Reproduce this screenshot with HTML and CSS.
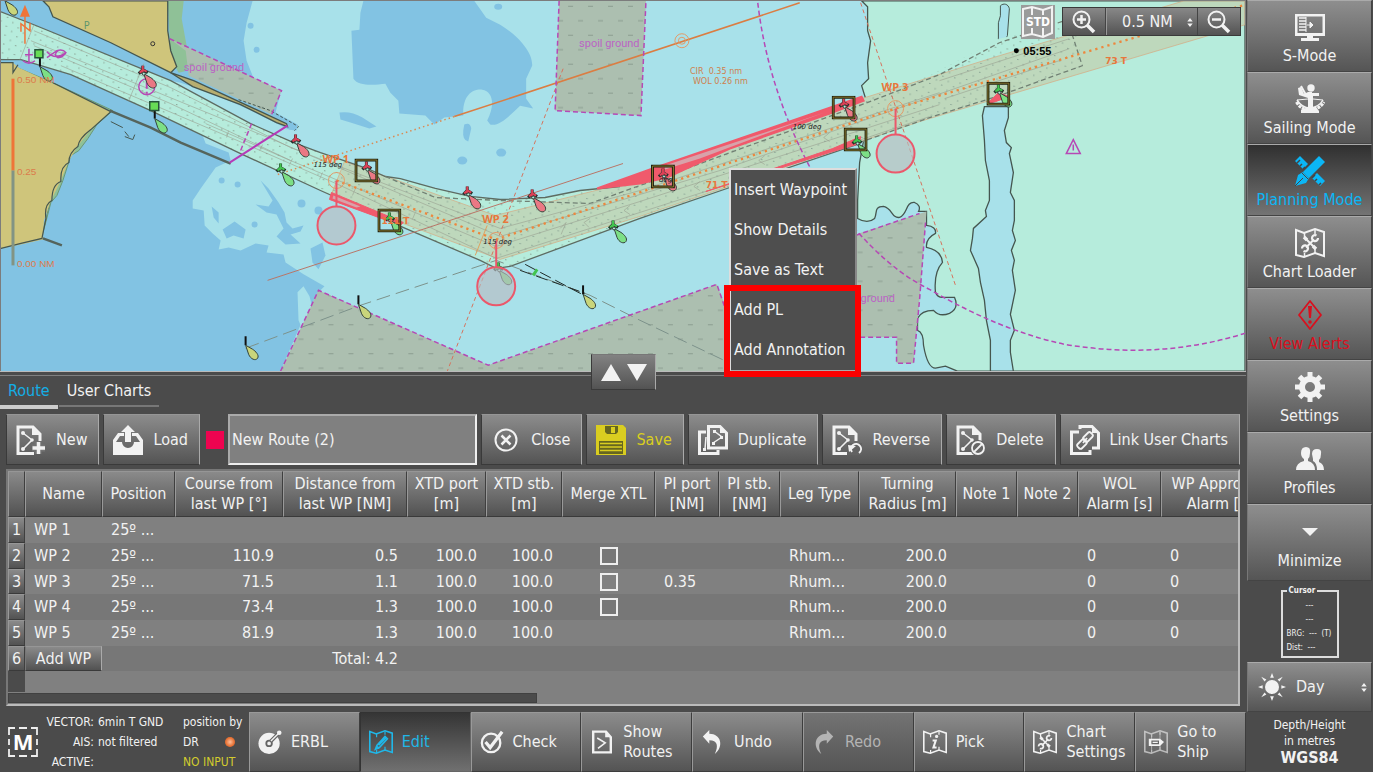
FILE: index.html
```html
<!DOCTYPE html>
<html lang="en">
<head>
<meta charset="utf-8">
<title>Route Planning</title>
<link rel="stylesheet" href="styles.css">
</head>
<body>
<svg class="defs" aria-hidden="true">
  <defs>
    <pattern id="hatch" width="40" height="29" patternUnits="userSpaceOnUse"><path d="M8 5.500h5M28 5.500h5M18 20h5M38 20h2M0 20h3" stroke="#8b9d90" fill="none"/></pattern>
    <pattern id="dots" width="12" height="9" patternUnits="userSpaceOnUse" patternTransform="rotate(8)"><path d="M2 2h1.500M8 6.500h1.500" stroke="#8aa596" stroke-width="1"/></pattern>
    <symbol id="cone" viewBox="0 0 20 26" overflow="visible"><path d="M-1 0V-8M-5 0L-1-4L4-1" stroke-width="3" stroke="#22302a"/><path d="M-1-1V-8M-4-1L-1-4L3-2" stroke-width="2"/><path d="M0 0L3 9C5 14 10 16 12 13C14 10 10 6 7 4Z" fill="currentColor" stroke="#33423a"/><circle r="1.500" fill="#b6ecdc" stroke="#33423a"/></symbol>
    <symbol id="beacon" viewBox="0 0 20 26" overflow="visible"><path d="M0 0V-9" stroke="#111" stroke-width="2"/><path d="M0 0L3 9C5 14 10 16 12 13C14 10 10 6 7 4Z" fill="currentColor" stroke="#33423a"/></symbol>
    <symbol id="frame" viewBox="0 0 24 24"><path d="M1.500 1.500h21v21h-21z" fill="none" stroke="#20200f" stroke-width="3"/><path d="M1.500 1.500h21v21h-21z" fill="none" stroke="#8a7a30"/></symbol>
    <symbol id="map" viewBox="0 0 30 30"><path d="M1 2L9 5L20 1L29 4V28L20 25L9 29L1 27Z" fill="none" stroke="currentColor" stroke-width="2"/><path d="M9.500 5v4M20 2v4M9.500 25v4M20 21v4" stroke="currentColor" stroke-width="1.500"/></symbol>
    <symbol id="tools" viewBox="0 0 30 30"><path d="M9 9L12 12M18 18L21 21" stroke="currentColor" stroke-width="3.500"/><path d="M11 11L19 19M19 11.500L11 19.500" stroke="currentColor" stroke-width="2"/><path d="M21.500 7.500A3 3 0 1 0 23 10M8.500 23A3 3 0 1 0 7 20.500" fill="none" stroke="currentColor" stroke-width="2.200"/></symbol>
    <symbol id="sheet" viewBox="0 0 30 30"><path d="M18 28.500H2V2H17L24 9V16" fill="none" stroke="currentColor" stroke-width="3"/><path d="M16 2v8h8z" fill="currentColor"/><path d="M7 8L16 15L7 24" fill="none" stroke="currentColor" stroke-width="1.500"/><circle cx="7" cy="8" r="2" fill="currentColor"/><circle cx="16" cy="15" r="1.800" fill="currentColor"/><circle cx="7" cy="24" r="2" fill="currentColor"/></symbol>
    <symbol id="updown" viewBox="0 0 6 10"><path d="M0 4L3 0L6 4ZM0 6L3 10L6 6Z" fill="currentColor"/></symbol>
  </defs>
</svg>
<div class="app">
  <main class="work">
    <section class="chart" aria-label="Chart">
      <svg class="chart-drawing" viewBox="0 0 1246 371" preserveAspectRatio="xMidYMid slice" fill="none">
        <rect width="1246" height="371" fill="#a8e1ea"/>
        <!-- deep water -->
        <g fill="#82c3e3">
          <path d="M0 0H252L246 22L243 40L246 60L254 80L280 92L275 112L297 124L296 130L286 129L240 112L200 100L160 86L150 100L200 130L205 143L228 152L230 160L215 167L200 188L192 200V208L203 210L204 225L212 233L220 240L218 249L228 247L240 250L255 243L268 245L266 252L283 254L285 262L303 274L324 286L318 292L302 320L280 371H0Z"/>
          <path d="M363 0L360 12L359 29L351 30L353 78C358 86 375 84 385 83L390 92L398 100L399 113L425 115L434 124L444 117L463 115C462 95 472 88 482 89C493 91 495 104 487 120L490 124C500 126 510 114 520 105L533 108L526 98V78L532 65C533 50 515 33 500 24L486 17L474 0Z"/>
          <path d="M339 112Q350 110 362 117L376 126L369 128L350 122L340 119ZM464 124Q470 121 471 128L468 141Q462 140 463 130Z"/>
          <ellipse cx="462" cy="160" rx="5" ry="4"/><ellipse cx="501" cy="152" rx="5" ry="4"/><ellipse cx="498" cy="6" rx="4" ry="3"/>
          <path d="M310 248L322 242L325 255L318 269L312 262Z"/>
          <path d="M260 180L268 188L278 202L284 212L286 222L292 228L303 225L300 231L290 234L300 243L285 244L276 236L283 228L276 214L266 212L255 204L268 206L272 200ZM222 229L234 221L245 229L243 238L233 235L226 238ZM211 206L218 212V223L213 217Z"/>
          <circle cx="221" cy="180" r="3"/><circle cx="237" cy="184" r="3"/><circle cx="301" cy="203" r="4"/><circle cx="254" cy="224" r="3"/><circle cx="318" cy="210" r="4"/>
        </g>
        <path d="M297 292L303 286L309 296L313 312L303 332L298 320ZM150 76L180 82L215 94L250 110L290 130L250 121Z" fill="#a8e1ea"/>
        <circle cx="250" cy="25" r="3" fill="#82c3e3"/><circle cx="256" cy="49" r="3" fill="#82c3e3"/>
        <!-- shallows to the east -->
        <path d="M862 0L868 6V30L871 40L868 62L869 78L862 85L866 98L862 120L864 140L860 162L858 200V218Q868 224 875 218C878 212 874 206 884 206C893 208 892 218 900 217C908 214 906 201 915 202Q922 205 919 211L927 211V225Q937 226 936 233Q926 238 927 247Q942 250 943 262Q934 272 936 292Q938 298 945 297H955Q960 308 950 313Q940 317 934 310Q922 310 918 318V330Q924 332 924 345Q928 368 936 368L946 366L958 371H1246V0Z" fill="#b6ecdc" stroke="#45564f" stroke-width="1.300"/>
        <path d="M985 106L983 115L985 140L986 160L990 180V200L986 210L987 216L974 228L973 238L971 250L979 268L981 282L985 300L987 320L991 340V371H1014L1011 352L1011 340L1015 330L1011 314L1016 290L1013 270L1015 260L1012 250L1016 240L1013 230L1015 220V200L1011 192L1014 172L1010 153L1012 147L1007 142L1005 130L1009 117V106Z" fill="#a8e1ea" stroke="#45564f" stroke-width="1.300"/>
        <path d="M1001 5C1004 2 1009 3 1010 8L1008 35Q1004 46 999 38L999 22L1001 15Z" fill="#a8e1ea" stroke="#45564f"/>
        <!-- land -->
        <path d="M167 0H183L181 18L185 40L188 56L186 70L178 72L170 58Z" fill="#8fc197"/>
        <path d="M42 0L48 6L52 16L110 42L170 72L176 66L170 50L167 30V0Z" fill="#cfc57b" stroke="#45564f" stroke-width="1.300"/>
        <path d="M14 66L52 82L112 110L96 124L87 138L78 150L70 155L62 180L56 195L50 202L44 225L40 239L52 190L78 130L106 112Z" fill="#8fc197" stroke="#6b9875"/>
        <path d="M0 62H12L18 67L70 91L110 111L90 129L78 144L68 160L60 180L50 200L43 220L42 239L20 244L0 248Z" fill="#cfc57b"/>
        <path d="M110 111L90 129Q78 138 77 146Q68 152 68 162Q59 166 60 181Q51 184 51 200Q43 204 45 218L41 238L20 243L0 248M52 82L110 111M0 62H12V72L17 64" stroke="#45564f" stroke-width="1.200"/>
        <path d="M109 110L150 127L180 142L230 163M42 238L61 245" stroke="#55645c" stroke-width="2.500"/>
        <path d="M110 121L122 127M124 131L128 136M124 136L132 139L134 134" stroke="#45564f"/>
        <!-- spoil grounds -->
        <g fill="#acbfb0">
          <path d="M169 38L281 90L271 114L188 75L185 50Z"/>
          <path d="M559 0L555 110L641 115L646 0Z"/>
          <path d="M318 290L488 365L717 284L735 330L745 371H280Z"/>
          <path d="M856 234L927 211L920 300L914 363H897V337H856Z"/>
        </g>
        <g fill="url(#hatch)">
          <path d="M190 50L281 90L271 114L188 75Z"/><path d="M559 0L555 110L641 115L646 0Z"/>
          <path d="M318 290L488 365L717 284L735 330L745 371H280Z"/><path d="M856 234L927 211L920 300L914 363H897V337H856Z"/>
        </g>
        <path d="M170 72L193 80L286 123L287 126L276 122L240 104L192 86Z" fill="#b7ae70" stroke="#45564f" stroke-width="1.300"/>
        <path d="M238 99L270 110L298 126L294 130" stroke="#45564f" stroke-dasharray="3 2"/>
        <!-- dredged channel -->
        <path d="M0 11L33 24L170 80L250 123L293 142L320 152L367 168L385 176L400 178L435 188L470 196L500 199L545 197L580 190L640 181L730 146L862 98L930 75L1000 38L1075 20L1083 65L1000 94L930 117L860 143L730 187L640 218L510 266L496 268L480 260L405 228L320 190L240 153L150 110L70 74L20 59L0 58Z" fill="#b6ecdc"/>
        <path d="M344 161L495 215L640 179L862 98L1000 55L1185 0H1246V24L1000 97L920 121L640 216L500 259L330 196Z" fill="#c0d0b0" fill-opacity=".72" stroke="#d8a57c" stroke-opacity=".65"/>
        <path d="M0 11L33 24L170 80L250 123L293 142L320 152L367 168L385 176L400 178L435 188L470 196L500 199L545 197L580 190L640 181L730 146L862 98L930 75L1000 38L1075 20L1083 65L1000 94L930 117L860 143L730 187L640 218L510 266L496 268L480 260L405 228L320 190L240 153L150 110L70 74L20 59L0 58Z" fill="url(#dots)"/>
        <g stroke="#5d6b62" stroke-width="1.300">
          <path d="M0 11L33 24L170 80L250 123L293 142L320 152L367 168L385 176L400 178L435 188L470 196L500 199L545 197L580 190L620 186"/>
          <path d="M0 59L20 59L70 74L150 110L240 153L320 190L405 228L480 260L496 268L510 266L640 218L730 187L860 143"/>
        </g>
        <path d="M385 176L435 197L500 200L590 203L640 185L865 103L940 74L1000 42L1065 20M860 142L930 117L1000 95L1083 65L1071 28" stroke="#718074" stroke-width="1.300" stroke-dasharray="5 3"/>
        <g stroke="#99a091" stroke-opacity=".75" stroke-width=".8">
          <path d="M33 30L170 87L290 147L500 228L640 190L940 92M33 45L170 103L290 160L496 246L640 201L940 104M60 65L230 137L340 185L496 258L740 180L930 116M30 40L270 138L500 236L720 170L1070 48"/>
          <path d="M19 59L33 24M128 100L143 63M205 123L290 160M940 80L1070 38M945 98L1060 60"/>
          <path d="M228 130l-2 7M262 144l-3 6M292 158l-3 6M322 172l-3 7M355 188l-3 7M415 212l-3 7M560 228l6-6l-5 12M590 218l-6 4l5 5M630 205l-6 5l6 4M700 181l-6 5l6 4M765 155l-6 5l6 4M830 132l-6 5l6 4"/>
        </g>
        <!-- bearing and leading lines -->
        <path d="M245 348L360 305L496 260L590 295L640 320L724 360" stroke="#7c928b" stroke-dasharray="14 6"/>
        <path d="M525 264L582 294M520 270L585 293" stroke="#1f2b28" stroke-dasharray="12 5"/>
        <path d="M267 280L623 163" stroke="#b97567"/>
        <path d="M563 68L447 371M861 2L956 285" stroke="#d5735d" stroke-dasharray="4 3"/>
        <path d="M454 116L800 2" stroke="#db7d42" stroke-width="1.600"/>
        <path d="M454 116L277 174" stroke="#db8a52" stroke-width="1.500" stroke-dasharray="1.500 3"/>
        <path d="M336 180L496 239L896 108L1246 4" stroke="#ed873d" stroke-width="2.300" stroke-dasharray="2.300 4"/>
        <path d="M475 255L487 225" stroke="#dfa15f"/>
        <g stroke="#e39a67"><circle cx="682" cy="40" r="7"/><circle cx="682" cy="40" r="3.500"/><circle cx="336" cy="180" r="8"/><circle cx="496" cy="240" r="8"/><circle cx="896" cy="108" r="8"/></g>
        <!-- magenta limits -->
        <g stroke="#b648b5" stroke-width="1.500" stroke-dasharray="5 3">
          <path d="M169 38L281 90L271 114M559 0L555 110L641 115L646 0M280 371L318 290L488 365L717 284L726 310M856 235L920 213M926 222L920 300L914 363H897V337H856M251 123L240 150"/>
          <path d="M758 2Q768 88 812 170Q870 260 930 289Q1000 330 1065 344Q1160 360 1246 333"/>
        </g>
        <path d="M287 125L229 162" stroke="#b63ab8" stroke-width="2"/>
        <g stroke="#b648b5"><circle cx="146" cy="86" r="8" stroke-width="1.500"/><path d="M146 81v7M146 91v2" stroke-width="2"/><path d="M28 48V62M24 54H32M22 60Q28 65 34 60M46 51Q54 60 65 52Q62 48 56 50L46 57M57 50Q52 54 57 57Q62 57 65 52M1074 139L1081 153H1067ZM1074 144v6" stroke-width="1.500"/></g>
        <!-- shallow contour hazards -->
        <g fill="#f05a6c" stroke="#f05a6c">
          <path d="M597 188L650 169L862 96L864 100L830 113L730 148L667 177L640 183Z" stroke-width="2"/>
          <path d="M331 192L403 222L400 225L329 199ZM706 191L833 148L861 136L860 143L830 152Z"/>
          <path d="M988 103L999 92L1010 96L996 101Z"/>
        </g>
        <path d="M665 165L780 127L825 112L775 130L700 158L665 169ZM333 195L360 206L356 207L332 198Z" fill="#d8a2aa"/>
        <!-- buoys -->
        <g color="#ea7884" stroke="#dd4056"><use href="#cone" x="143" y="73" width="20" height="26"/><use href="#cone" x="296" y="142" width="20" height="26"/><use href="#cone" x="367" y="169" width="20" height="26"/><use href="#cone" x="468" y="194" width="20" height="26"/><use href="#cone" x="533" y="197" width="20" height="26"/><use href="#cone" x="845" y="106" width="20" height="26"/><use href="#cone" x="664" y="176" width="20" height="26"/></g>
        <g color="#7cdf85" stroke="#42c44f"><use href="#cone" x="281" y="171" width="20" height="26"/><use href="#cone" x="390" y="220" width="20" height="26"/><use href="#cone" x="614" y="228" width="20" height="26"/><use href="#cone" x="499" y="270" width="20" height="26"/><use href="#cone" x="1000" y="92" width="20" height="26"/><use href="#cone" x="858" y="143" width="20" height="26"/><use href="#beacon" x="39" y="66" width="20" height="26"/><use href="#beacon" x="154" y="118" width="20" height="26"/></g>
        <g color="#c9d57b"><use href="#beacon" x="245" y="345" width="20" height="26"/><use href="#beacon" x="358" y="304" width="20" height="26"/><use href="#beacon" x="583" y="294" width="20" height="26"/><use href="#beacon" x="4" y="0" width="20" height="26"/></g>
        <path d="M34 49h8v8h-8zM149 101h9v9h-9z" fill="#67dc55" stroke="#26543a" stroke-width="1.500"/>
        <path d="M533 275l4-6" stroke="#42c44f" stroke-width="3"/>
        <circle cx="152" cy="43" r="2" stroke="#333"/>
        <g><use href="#frame" x="354" y="158" width="24" height="24"/><use href="#frame" x="377" y="208" width="24" height="24"/><use href="#frame" x="651" y="164" width="24" height="24"/><use href="#frame" x="832" y="95" width="24" height="24"/><use href="#frame" x="844" y="127" width="24" height="24"/><use href="#frame" x="987" y="81" width="24" height="24"/></g>
        <g stroke="#eb586b" stroke-width="2" fill="#b8bcc2" fill-opacity=".65"><circle cx="336" cy="225" r="19"/><circle cx="496" cy="286" r="19"/><circle cx="896" cy="153" r="19"/><path d="M336 180V206M496 240V267M896 108V134"/></g>
        <!-- scale and north arrow -->
        <path d="M12 78V170" stroke="#ef7438" stroke-width="3"/><path d="M12 170V265" stroke="#829484" stroke-width="3"/>
        <path d="M24 43V14" stroke="#ef7438" stroke-width="1.500"/><path d="M24 4L29 16H19Z" fill="#ef7438"/><path d="M20 31V23L29 30V22" stroke="#ef7438" stroke-width="1.500"/>
        <g class="label-orange"><text x="16" y="82">0.50 NM</text><text x="16" y="174">0.25</text><text x="16" y="267">0.00 NM</text></g>
        <g class="label-range"><text x="690" y="73">CIR&#160; 0.35 nm</text><text x="693" y="83">WOL 0.26 nm</text></g>
        <g class="label-wp"><text x="322" y="162">WP 1</text><text x="482" y="223">WP 2</text><text x="882" y="90">WP 3</text></g>
        <g class="label-leg"><text x="1106" y="63">73 T</text><text x="706" y="188">71 T</text><text x="381" y="224">111 T</text></g>
        <g class="label-deg"><text x="313" y="166">115 deg</text><text x="483" y="244">115 deg</text><text x="793" y="128">100 deg</text><text x="659" y="181">deg</text></g>
        <g class="label-spoil"><text x="183" y="70">spoil ground</text><text x="579" y="46">spoil ground</text><text x="861" y="302">ground</text></g>
        <text class="label-p" x="83" y="28">P</text>
        <circle cx="1017" cy="50" r="2.500" fill="#000"/><text class="label-time" x="1024" y="54">05:55</text>
      </svg>

      <div class="zoom-bar">
        <svg class="std" viewBox="0 0 34 34" aria-hidden="true"><rect width="34" height="34" fill="#9a9b9a"/><path d="M2 4L11 2L22 5L31 2V28L22 32L11 29L2 31ZM11 2v8M22 5v5M11 23v7M22 23v9" fill="none" stroke="#f2f2f2" stroke-width="2"/><rect x="4" y="10" width="25" height="13" fill="#9a9b9a"/><text class="std-text" x="17" y="21" text-anchor="middle">STD</text></svg>
        <div class="zoom-group">
          <button class="zoom-btn" aria-label="Zoom in"><svg viewBox="0 0 24 24"><circle cx="9.500" cy="9.500" r="8" fill="none" stroke="currentColor" stroke-width="2"/><path d="M15 15L22 22" stroke="currentColor" stroke-width="3.500"/><path d="M5 9.500h9M9.500 5v9" stroke="currentColor" stroke-width="2.500"/></svg></button>
          <div class="scale"><select aria-label="Chart range"><option>0.5 NM</option></select><svg class="arrows" aria-hidden="true"><use href="#updown"/></svg></div>
          <button class="zoom-btn" aria-label="Zoom out"><svg viewBox="0 0 24 24"><circle cx="9.500" cy="9.500" r="8" fill="none" stroke="currentColor" stroke-width="2"/><path d="M15 15L22 22" stroke="currentColor" stroke-width="3.500"/><path d="M5 9.500h9" stroke="currentColor" stroke-width="2.500"/></svg></button>
        </div>
      </div>

      <div class="menu" role="menu">
        <button role="menuitem">Insert Waypoint</button>
        <button role="menuitem">Show Details</button>
        <button role="menuitem">Save as Text</button>
        <button role="menuitem">Add PL</button>
        <button role="menuitem">Add Annotation</button>
        <div class="highlight"></div>
      </div>
      <button class="resize" aria-label="Resize panel"><svg viewBox="0 0 46 18"><path d="M0 18L10 1L20 18ZM26 1H46L36 18Z" fill="currentColor"/></svg></button>
    </section>

    <section class="panel">
      <nav class="tabs"><button class="tab active">Route</button><button class="tab">User Charts</button></nav>
      <div class="toolbar">
        <button class="tool"><svg viewBox="0 0 30 30"><use href="#sheet"/><path d="M22 17V29M16 23H29" stroke="#737373" stroke-width="7"/><path d="M22.500 17V29M16.500 23H29" stroke="currentColor" stroke-width="3.500"/></svg>New</button>
        <button class="tool"><svg viewBox="0 0 30 30"><path d="M0 15L5 8H11V11H7L3 17H9A6 6 0 0 0 21 17H27L23 11H19V8H25L30 15V30H0Z" fill="currentColor"/><path d="M15 0L22 7H18V17H12V7H8Z" fill="currentColor"/></svg>Load</button>
        <span class="swatch"></span>
        <input class="route-name" type="text" aria-label="Route name" value="New Route (2)">
        <button class="tool"><svg viewBox="0 0 30 30"><circle cx="15" cy="15" r="10.500" fill="none" stroke="currentColor" stroke-width="2"/><path d="M10.500 10.500L19.500 19.500M19.500 10.500L10.500 19.500" stroke="currentColor" stroke-width="2.500"/></svg>Close</button>
        <button class="tool save"><svg viewBox="0 0 30 30"><path d="M0 0H27L30 3V30H0Z" fill="currentColor"/><path d="M9 1H22V7L20 9H11L9 7ZM3 16H27V29H3Z" fill="#66661f"/><path d="M15 2h4v6h-4z" fill="currentColor"/><path d="M4 18.500h22M4 22h22M4 25.500h22" stroke="currentColor" stroke-width="1.500"/></svg>Save</button>
        <button class="tool"><svg viewBox="0 0 30 30" fill="none" stroke="currentColor"><path d="M8 7H1.500V28.500H20V25" stroke-width="3"/><path d="M10.500 1.500H22L28.500 8V23H10.500Z" stroke-width="3"/><path d="M16 6L24 12L15 18M8 12L7 24" stroke-width="1.500"/><path d="M15 5h3v3h-3zM22 11h3v3h-3zM14 17h3v3h-3zM5 23h3v3h-3zM22 1v7h7z" fill="currentColor" stroke="none"/></svg>Duplicate</button>
        <button class="tool"><svg viewBox="0 0 30 30"><use href="#sheet"/><path d="M15 18H30V30H15Z" fill="#626262"/><path d="M20 27A5 5 0 1 1 27 28" fill="none" stroke="currentColor" stroke-width="2"/><path d="M16 20L24 21L17 27Z" fill="currentColor"/></svg>Reverse</button>
        <button class="tool"><svg viewBox="0 0 30 30"><use href="#sheet"/><circle cx="22" cy="23" r="8" fill="#666"/><circle cx="22" cy="23" r="6" fill="none" stroke="currentColor" stroke-width="1.800"/><path d="M18 27L26 19" stroke="currentColor" stroke-width="1.800"/></svg>Delete</button>
        <button class="tool"><svg viewBox="0 0 30 30" fill="none" stroke="currentColor"><path d="M9 7H1.500V28.500H20V25M10 4V1.500H22L28.500 8V23H22" stroke-width="3"/><path d="M22 1v7h7z" fill="currentColor" stroke="none"/><g stroke-width="1.800"><rect x="13" y="9" width="10" height="6" rx="2" transform="rotate(-45 18 12)"/><rect x="7" y="16" width="10" height="6" rx="2" transform="rotate(-45 12 19)"/><path d="M13 18L17 13"/></g></svg>Link User Charts</button>
      </div>

      <div class="grid-box">
        <div class="grid-view">
        <table class="grid">
          <colgroup><col class="c-num"><col class="c-name"><col class="c-pos"><col class="c-course"><col class="c-dist"><col class="c-xp"><col class="c-xs"><col class="c-merge"><col class="c-pp"><col class="c-ps"><col class="c-leg"><col class="c-turn"><col class="c-note"><col class="c-note"><col class="c-wol"><col class="c-app"></colgroup>
          <thead><tr><th></th><th>Name</th><th>Position</th><th>Course from<br>last WP [°]</th><th>Distance from<br>last WP [NM]</th><th>XTD port<br>[m]</th><th>XTD stb.<br>[m]</th><th>Merge XTL</th><th>PI port<br>[NM]</th><th>PI stb.<br>[NM]</th><th>Leg Type</th><th>Turning<br>Radius [m]</th><th>Note 1</th><th>Note 2</th><th>WOL<br>Alarm [s]</th><th>WP Approach<br>Alarm [s]</th></tr></thead>
          <tbody>
            <tr><th>1</th><td>WP 1</td><td>25º ...</td><td></td><td></td><td></td><td></td><td></td><td></td><td></td><td></td><td></td><td></td><td></td><td></td><td></td></tr>
            <tr><th>2</th><td>WP 2</td><td>25º ...</td><td class="n">110.9</td><td class="n">0.5</td><td class="n">100.0</td><td class="n">100.0</td><td class="m"><input type="checkbox" aria-label="Merge XTL WP 2"></td><td></td><td></td><td>Rhum...</td><td class="n">200.0</td><td></td><td></td><td>0</td><td>0</td></tr>
            <tr><th>3</th><td>WP 3</td><td>25º ...</td><td class="n">71.5</td><td class="n">1.1</td><td class="n">100.0</td><td class="n">100.0</td><td class="m"><input type="checkbox" aria-label="Merge XTL WP 3"></td><td>0.35</td><td></td><td>Rhum...</td><td class="n">200.0</td><td></td><td></td><td>0</td><td>0</td></tr>
            <tr><th>4</th><td>WP 4</td><td>25º ...</td><td class="n">73.4</td><td class="n">1.3</td><td class="n">100.0</td><td class="n">100.0</td><td class="m"><input type="checkbox" aria-label="Merge XTL WP 4"></td><td></td><td></td><td>Rhum...</td><td class="n">200.0</td><td></td><td></td><td>0</td><td>0</td></tr>
            <tr><th>5</th><td>WP 5</td><td>25º ...</td><td class="n">81.9</td><td class="n">1.3</td><td class="n">100.0</td><td class="n">100.0</td><td></td><td></td><td></td><td>Rhum...</td><td class="n">200.0</td><td></td><td></td><td>0</td><td>0</td></tr>
            <tr><th>6</th><td class="add"><button>Add WP</button></td><td></td><td></td><td class="n">Total: 4.2</td><td></td><td></td><td></td><td></td><td></td><td></td><td></td><td></td><td></td><td></td><td></td></tr>
          </tbody>
        </table>
        <div class="grid-rest"></div>
        </div>
        <div class="scroll"><div class="thumb"></div></div>
      </div>
    </section>

    <footer class="bottom">
      <div class="status">
        <svg class="mode" viewBox="0 0 30 30" aria-hidden="true"><path d="M1 8V1H7M11 1H19M23 1H29V8M29 12V18M29 22V29H23M19 29H11M7 29H1V22M1 18V12" fill="none" stroke="#eee" stroke-width="1.800"/><text class="mode-text" x="15" y="23" text-anchor="middle">M</text></svg>
        <dl class="facts"><dt>VECTOR:</dt><dd>6min T GND</dd><dt>AIS:</dt><dd>not filtered</dd><dt>ACTIVE:</dt><dd></dd></dl>
        <div class="position"><span>position by</span><span class="dr">DR <i class="lamp"></i></span><span class="warn">NO INPUT</span></div>
      </div>
      <button class="action"><svg viewBox="0 0 26 26"><circle cx="12" cy="14.500" r="11.500" fill="currentColor"/><circle cx="12" cy="14.500" r="3" fill="none" stroke="#666" stroke-width="2"/><path d="M14 12L23 3" stroke="#666" stroke-width="4"/><path d="M14 12L23 3" stroke="currentColor" stroke-width="1.500"/><circle cx="23" cy="3" r="2.500" fill="currentColor"/></svg>ERBL</button>
      <button class="action on"><svg viewBox="0 0 30 30"><use href="#map"/><path d="M10 19L20 8L23 11L13 22L8 24ZM9 20L13 23M12 19L21 10" fill="none" stroke="currentColor" stroke-width="2"/></svg>Edit</button>
      <button class="action"><svg viewBox="0 0 26 26" fill="none" stroke="currentColor"><circle cx="12" cy="14" r="10" stroke-width="2.500"/><path d="M6 13L11 19L24 2" stroke-width="3.500"/></svg>Check</button>
      <button class="action"><svg viewBox="0 0 30 30"><path d="M4 2H20L26 9V28H4Z" fill="none" stroke="currentColor" stroke-width="3"/><path d="M19 2V9H26Z" fill="currentColor"/><path d="M9 10L19 16L10 23" fill="none" stroke="currentColor" stroke-width="2"/></svg><span>Show<br>Routes</span></button>
      <button class="action"><svg viewBox="0 0 26 26"><path d="M2 7L9 0V4C22 4 25 18 15 26C19 17 18 11 9 11V15Z" fill="currentColor"/></svg>Undo</button>
      <button class="action" disabled><svg viewBox="0 0 26 26"><path d="M23 7L16 0V4C3 4 0 18 10 26C6 17 7 11 16 11V15Z" fill="currentColor"/></svg>Redo</button>
      <button class="action"><svg viewBox="0 0 30 30"><use href="#map"/><path d="M12 13H16L13 22H17" fill="none" stroke="currentColor" stroke-width="2.500"/><circle cx="17" cy="8" r="2" fill="currentColor"/></svg>Pick</button>
      <button class="action"><svg viewBox="0 0 30 30"><use href="#map"/><use href="#tools"/></svg><span>Chart<br>Settings</span></button>
      <button class="action"><svg viewBox="0 0 30 30"><g opacity=".6"><use href="#map"/><path d="M9.500 5V28M20 2V25" stroke="currentColor"/></g><path d="M6 11H20L25 15L20 20H6Z" fill="currentColor"/><path d="M10 14h8v3h-8z" fill="none" stroke="#666" stroke-width="1.500"/></svg><span>Go to<br>Ship</span></button>
    </footer>
  </main>

  <aside class="side">
    <button class="mode-btn"><svg viewBox="0 0 30 30"><path d="M0 2H30V24H18V26H24V29H6V26H12V24H0ZM2.500 4.500V21H27.500V4.500Z" fill="currentColor" fill-rule="evenodd"/><path d="M4 6h7M4 9h7M4 12h7M4 15h7M4 18h7" stroke="currentColor" stroke-width="1.500"/><path d="M11 5v15M12 13h3M15 10v6l3-3z" stroke="currentColor" fill="currentColor"/></svg>S-Mode</button>
    <button class="mode-btn"><svg viewBox="0 0 30 30"><circle cx="16" cy="4" r="3.700" fill="currentColor"/><path d="M13 8H17V9H24V12H18V23H21L24 27V29H6V26L13 23V14L4 11L3 4L6 3L9 10Z" fill="currentColor"/><path d="M6 2L11 11" stroke="currentColor" stroke-width="2"/><path d="M2 16Q7 24 15 24Q24 23 28 16" fill="none" stroke="currentColor" stroke-width="1.500"/><path d="M1.500 18Q6 26 15 26Q25 25 29 18" fill="none" stroke="currentColor" stroke-width="3" stroke-dasharray="3 1"/><path d="M2 16L13 15M28 16L18 15" stroke="currentColor"/></svg>Sailing Mode</button>
    <button class="mode-btn on"><svg viewBox="0 0 30 30"><path d="M0 5L5 0L13 8L8 13ZM17 22L22 17L30 25L25 30Z" fill="currentColor"/><path d="M5 10l2-2M8 13l2-2M20 25l2-2M24 29l2-2M2 7l3-3M17 22l3-3" stroke="#444" stroke-width="1.500"/><path d="M24 0L30 6L14 22L8 16Z" fill="currentColor"/><path d="M8 16L14 22L11 27L0 30L3 19Z" fill="currentColor"/><path d="M0 30L8 22M7 17l6 6" stroke="#444"/></svg>Planning Mode</button>
    <button class="mode-btn"><svg viewBox="0 0 30 30"><use href="#map"/><use href="#tools"/></svg>Chart Loader</button>
    <button class="mode-btn alert"><svg viewBox="0 0 30 30"><path d="M15 1L26 15L15 29L4 15Z" fill="none" stroke="currentColor" stroke-width="1.800" stroke-linejoin="round"/><path d="M13 6H17L16 18H14Z" fill="currentColor"/><circle cx="15" cy="22" r="1.800" fill="currentColor"/></svg>View Alerts</button>
    <button class="mode-btn"><svg viewBox="0 0 30 30"><circle cx="15" cy="15" r="8" fill="none" stroke="currentColor" stroke-width="6"/><path d="M15 0V6M15 24V30M0 15H6M24 15H30M4.500 4.500L9 9M21 21L25.500 25.500M4.500 25.500L9 21M21 9L25.500 4.500" stroke="currentColor" stroke-width="5"/></svg>Settings</button>
    <button class="mode-btn"><svg viewBox="0 0 30 30"><path d="M6 9Q6 3 11 3Q16 3 15 9Q15 13 13 15V17Q20 19 20 26H1Q1 19 9 17V15Q6 13 6 9ZM17 10Q17 5 22 5Q27 5 26 10Q26 14 24 16V18Q29 20 29 26H22Q22 19 18 17V15Z" fill="currentColor"/></svg>Profiles</button>
    <button class="mode-btn last"><svg viewBox="0 0 30 30"><path d="M7 11H23L15 19Z" fill="currentColor"/></svg>Minimize</button>
    <div class="cursor-area"><fieldset class="cursor"><legend>Cursor</legend><p class="mid">---</p><p class="mid">---</p><p>BRG:&#160; --- &#160;(T)</p><p>Dist:&#160; ---</p></fieldset></div>
    <div class="day"><svg class="sun" viewBox="0 0 30 30" aria-hidden="true"><circle cx="15" cy="15" r="7.500" fill="currentColor"/><path d="M13 5L15 0L17 5ZM13 25L15 30L17 25ZM5 13L0 15L5 17ZM25 13L30 15L25 17ZM3.500 4L9 7L7 9ZM26.500 4L21 7L23 9ZM3.500 26L9 23L7 21ZM26.500 26L21 23L23 21Z" fill="currentColor"/></svg><select aria-label="Palette"><option>Day</option></select><svg class="arrows" aria-hidden="true"><use href="#updown"/></svg></div>
    <div class="depth">Depth/Height<br>in metres<br><strong>WGS84</strong></div>
  </aside>
</div>
</body>
</html>
```
FILE: styles.css
```css
* { box-sizing: border-box; }
body { margin: 0; background: #4b4b4b; color: #f2f2f2; font: 16px/20px "DejaVu Sans Condensed", "Noto Sans", sans-serif; }
button, select, input { font: inherit; color: inherit; margin: 0; border-radius: 0; }
button { padding: 0; }
.defs { position: absolute; width: 0; height: 0; }
.app { display: grid; grid-template-columns: minmax(0, 1fr) 127px; min-height: 100vh; }
.work { display: flex; flex-direction: column; min-width: 0; }

.chart { position: relative; height: 371px; border: 1px solid #7c7c7c; border-bottom: 0; }
.chart-drawing { display: block; width: 100%; height: 370px; }
.chart .label-orange text { font: 10px "Liberation Sans", sans-serif; fill: #dc7b4b; }
.chart .label-range text { font: 9px "DejaVu Sans Condensed", sans-serif; fill: #cf804d; }
.chart .label-wp text { font: bold 11px "Open Sans", sans-serif; fill: #e8773b; }
.chart .label-leg text { font: bold 9px "DejaVu Sans", sans-serif; fill: #e8773b; }
.chart .label-deg text { font: italic 7px "DejaVu Sans", sans-serif; fill: #222; }
.chart .label-spoil text { font: 11px Roboto, sans-serif; fill: #bb64c4; }
.chart .label-p { font: 10px "Noto Sans", sans-serif; fill: #5d956c; }
.chart .label-time { font: bold 11px "Liberation Sans", sans-serif; fill: #000; }
.chart .std-text { font: bold 12px "DejaVu Sans Condensed", sans-serif; fill: #fff; }

.zoom-bar { position: absolute; top: 4px; right: 4px; display: flex; align-items: flex-start; gap: 7px; }
.std { width: 34px; height: 34px; }
.zoom-group { display: flex; height: 29px; margin-top: 2px; border: 1px solid #3a3a3a; background: linear-gradient(#888, #535353); }
.zoom-btn { width: 42px; border: 0; background: none; display: grid; place-items: center; }
.zoom-btn svg { width: 24px; height: 24px; }
.scale { position: relative; width: 93px; border: 1px solid #444; border-width: 0 1px; box-shadow: inset 1px 0 #999; }
select { appearance: none; border: 0; background: none; width: 100%; height: 100%; }
.scale select { padding: 0 20px 0 16px; }
.arrows { position: absolute; right: 4px; top: 50%; width: 6px; height: 9px; margin-top: -4px; pointer-events: none; }

.menu { position: absolute; left: 728px; top: 167px; width: 128px; height: 204px; display: flex; flex-direction: column; background: #4e4e4e; border: 2px solid; border-color: #ddd #888 #aaa #ddd; z-index: 2; }
.menu button { height: 40px; border: 0; background: none; text-align: left; padding: 0 0 0 3px; white-space: nowrap; }
.highlight { position: absolute; left: -7px; top: 115px; width: 137px; height: 92px; border: 6px solid #fb0000; pointer-events: none; }
.resize { position: absolute; left: 590px; top: 353px; width: 65px; height: 36px; border: 1px solid; border-color: #777 #aaa #3a3a3a #3a3a3a; background: linear-gradient(#828282, #535353); display: grid; place-items: center; z-index: 1; }
.resize svg { width: 46px; height: 18px; }

.panel { flex: 1; display: flex; flex-direction: column; padding: 3px 6px 6px; border-top: 1px solid #bbb; }
.tabs { display: flex; gap: 1px; margin: 0 -6px; padding-bottom: 5px; border-top: 1px solid #808080; }
.tab { background: none; border: 0; border-bottom: 2px solid #777; height: 31px; padding: 0 8px; }
.tab.active { color: #14aee5; border-bottom: 4px solid #ccc; height: 33px; }
.toolbar { display: flex; align-items: center; gap: 4px; height: 51px; }
.tool { height: 51px; display: flex; align-items: center; gap: 10px; padding: 0 11px 0 9px; border: 1px solid; border-color: #969696 #aaa #3a3a3a #3a3a3a; background: linear-gradient(#8c8c8c, #545454); white-space: nowrap; }
.tool svg { width: 30px; height: 30px; flex: none; }
.save { color: #d9cd20; }
.swatch { width: 18px; height: 18px; margin-left: 2px; background: #ee0450; }
.route-name { flex: 1; min-width: 80px; height: 51px; background: #808080; border: 2px solid; border-color: #aaa #eee #eee #aaa; padding: 0 2px; }

.grid-box { flex: 1; display: flex; flex-direction: column; margin-top: 4px; border: 2px solid; border-color: #777 #bbb #bbb #777; background: #808080; overflow: hidden; }
.grid-view { flex: 1; display: flex; flex-direction: column; }
.grid { table-layout: fixed; width: 1270px; border-collapse: separate; border-spacing: 0; }
.c-num { width: 17px; } .c-name { width: 77px; } .c-pos { width: 73px; } .c-course { width: 108px; }
.c-dist { width: 124px; } .c-xp { width: 79px; } .c-xs { width: 76px; } .c-merge { width: 93px; }
.c-pp { width: 64px; } .c-ps { width: 61px; } .c-leg { width: 79px; } .c-turn { width: 97px; }
.c-note { width: 61px; } .c-wol { width: 83px; }
.grid th { font-weight: normal; padding: 0; border: 1px solid; border-color: #969696 #3f3f3f #3a3a3a #999; background: linear-gradient(#8a8a8a, #525252); white-space: nowrap; }
.grid thead th { height: 46px; }
.grid td { padding: 0 9px; white-space: nowrap; }
.grid tbody tr { height: 26px; }
.grid tbody tr:nth-child(3n) { height: 25px; }
.grid tbody tr:nth-child(even) { background: #777; }
.grid .n { text-align: right; }
.grid .m { text-align: center; }
.grid input { appearance: none; display: block; width: 18px; height: 18px; margin: 0 auto; border: 2px solid #eee; }
.grid .add { padding: 0; }
.add button { display: block; width: 100%; height: 25px; border: 1px solid; border-color: #969696 #aaa #3a3a3a #777; background: linear-gradient(#8a8a8a, #525252); }
.grid-rest { flex: 1; width: 17px; background: #4b4b4b; }
.scroll { height: 12px; padding: 1px 0; }
.thumb { width: 43%; height: 10px; background: #4b4b4b; border: 1px solid #414141; }

.bottom { display: grid; grid-template-columns: 249px repeat(9, minmax(0, 1fr)); height: 60px; }
.status { display: flex; align-items: center; padding-left: 8px; font-size: 12px; }
.mode { width: 30px; height: 30px; }
.mode-text { font: bold 22px "Noto Sans", sans-serif; fill: #fff; }
.facts { display: grid; grid-template-columns: 56px auto; grid-auto-rows: 20px; column-gap: 4px; margin: 0; width: 145px; white-space: nowrap; }
.facts dt { text-align: right; }
.facts dd { margin: 0; }
.position { display: flex; flex-direction: column; white-space: nowrap; }
.dr { display: flex; align-items: center; justify-content: space-between; padding-right: 7px; }
.lamp { width: 10px; height: 10px; border-radius: 50%; background: radial-gradient(#ffc09b, #e67033 60%); }
.warn { color: #d3cb2e; }
.action { display: flex; align-items: center; gap: 9px; padding: 0 0 0 8px; border: 1px solid; border-color: #999 #3d3d3d #3d3d3d #999; background: linear-gradient(#8c8c8c, #545454); text-align: left; line-height: 20px; }
.action svg { width: 24px; height: 24px; flex: none; }
.action.on { color: #20b7e8; background: linear-gradient(#353535, #707070); border-color: #333 #666 #666 #333; }
.action:disabled { color: #b4b4b4; background: linear-gradient(#737373, #555); }

.side { display: flex; flex-direction: column; padding: 0 1px; }
.mode-btn { height: 72px; display: flex; flex-direction: column; align-items: center; justify-content: center; gap: 4px; padding-top: 6px; border: 1px solid; border-color: #aaa #444 #444 #777; background: linear-gradient(#8e8e8e, #555); white-space: nowrap; }
.mode-btn svg { width: 30px; height: 30px; }
.mode-btn.on { color: #0bb6f5; background: linear-gradient(#303030, #747474); }
.mode-btn.alert { color: #d9101e; }
.mode-btn.last { height: 77px; padding-top: 2px; }
.cursor-area { flex: 1; display: flex; justify-content: center; align-items: flex-start; padding: 4px 0; }
.cursor { width: 58px; height: 73px; margin: 0; padding: 2px 4px; border: 2px solid #ddd; font-size: 8px; line-height: 14px; white-space: nowrap; }
.cursor legend { padding: 0 2px; line-height: 12px; font-weight: bold; }
.cursor p { margin: 0; }
.cursor .mid { text-align: center; }
.day { position: relative; display: flex; align-items: center; gap: 10px; height: 50px; padding-left: 10px; border: 1px solid; border-color: #aaa #444 #444 #777; background: linear-gradient(#8e8e8e, #555); }
.sun { width: 28px; height: 28px; flex: none; }
.depth { height: 60px; padding-top: 5px; text-align: center; font-size: 12px; line-height: 16px; }
.depth strong { font-size: 16px; line-height: 18px; }
```
